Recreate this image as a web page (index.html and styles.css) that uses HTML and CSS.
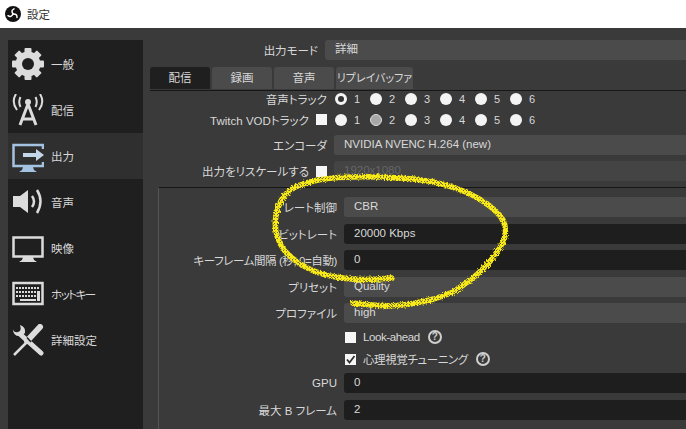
FILE: index.html
```html
<!DOCTYPE html>
<html>
<head>
    <meta charset="UTF-8">
    <title>設定</title>
    <link rel="stylesheet" href="styles.css">
</head>
<body>
    <div class="titlebar">
        <svg class="logo" viewBox="0 0 16 16">
            <circle cx="8" cy="8" r="8" fill="#111"/>
            <g fill="none" stroke="#fff" stroke-width="1.500" stroke-linecap="round">
                <path d="M8 8Q5.500 4.500 9 2.800"/>
                <path d="M8 8Q5.500 4.500 9 2.800" transform="rotate(120 8 8)"/>
                <path d="M8 8Q5.500 4.500 9 2.800" transform="rotate(240 8 8)"/>
            </g>
        </svg>
        <span>設定</span>
    </div>

    <div class="window">
        <!-- left list -->
        <div class="sidebar">
            <div class="nav-item">
                <svg viewBox="0 0 32 32">
                    <g fill="#dcdcdc">
                        <rect x="12.500" y="0" width="7" height="32" rx="1"/>
                        <rect x="12.500" y="0" width="7" height="32" rx="1" transform="rotate(45 16 16)"/>
                        <rect x="12.500" y="0" width="7" height="32" rx="1" transform="rotate(90 16 16)"/>
                        <rect x="12.500" y="0" width="7" height="32" rx="1" transform="rotate(135 16 16)"/>
                    </g>
                    <circle cx="16" cy="16" r="9" fill="none" stroke="#dcdcdc" stroke-width="7"/>
                    <circle cx="16" cy="16" r="6" fill="#1f1f1f"/>
                </svg>
                <span>一般</span>
            </div>
            <div class="nav-item">
                <svg viewBox="0 0 32 32">
                    <circle cx="16" cy="8" r="3" fill="#dcdcdc"/>
                    <path d="M16 10 8 31M16 10l8 21M11 25h10" fill="none" stroke="#dcdcdc" stroke-width="3"/>
                    <path d="M8.500 3Q6 8 8.500 13M23.500 3Q26 8 23.500 13M4 0Q-1 8 5 16M28 0Q33 8 27 16" fill="none" stroke="#dcdcdc" stroke-width="2"/>
                </svg>
                <span>配信</span>
            </div>
            <div class="nav-item selected">
                <svg viewBox="0 0 32 32">
                    <path d="M31 9V5H1.500v21H31v-4" fill="none" stroke="#a4c2e2" stroke-width="2.500"/>
                    <path d="M11 27h10l1 3 3 2H7l3-2z" fill="#a4c2e2"/>
                    <path d="M11 13h13V9l8 6-8 6v-4H11z" fill="#c3d6ea"/>
                </svg>
                <span>出力</span>
            </div>
            <div class="nav-item">
                <svg viewBox="0 0 32 32">
                    <path d="M1 10h7l8-6v23l-8-6H1z" fill="#dcdcdc"/>
                    <path d="M20 10q4 5.500 0 11M25 4q7 11 0 23" fill="none" stroke="#dcdcdc" stroke-width="2.500"/>
                </svg>
                <span>音声</span>
            </div>
            <div class="nav-item">
                <svg viewBox="0 0 32 32">
                    <rect x="1.500" y="5.500" width="29" height="19" fill="none" stroke="#dcdcdc" stroke-width="2.500"/>
                    <path d="M11 25h10l1 3 3 2H7l3-2z" fill="#dcdcdc"/>
                </svg>
                <span>映像</span>
            </div>
            <div class="nav-item">
                <svg viewBox="0 0 32 32">
                    <rect x="1.500" y="5" width="29" height="21" fill="none" stroke="#dcdcdc" stroke-width="2.500"/>
                    <path d="M4 10h24M4 14h24M4 18h24" fill="none" stroke="#dcdcdc" stroke-width="2" stroke-dasharray="2 1"/>
                    <path d="M8 22h16" fill="none" stroke="#dcdcdc" stroke-width="2"/>
                    <rect x="25" y="13" width="3" height="10" fill="#dcdcdc"/>
                </svg>
                <span class="tight">ホットキー</span>
            </div>
            <div class="nav-item">
                <svg viewBox="0 0 32 32">
                    <path d="M9 11 29 29" fill="none" stroke="#dcdcdc" stroke-width="5" stroke-linecap="round"/>
                    <path d="M1 5q0 8 8 7l4-3q1-6-5-8 2 6-2 7T1 5z" fill="#dcdcdc"/>
                    <path d="M2 31 16 17" fill="none" stroke="#dcdcdc" stroke-width="2.500"/>
                    <path d="M15 17 28 3" fill="none" stroke="#dcdcdc" stroke-width="6" stroke-linecap="round"/>
                    <path d="M15 13.500 19 18" fill="none" stroke="#1f1f1f" stroke-width="1.500"/>
                </svg>
                <span>詳細設定</span>
            </div>
        </div>

        <div class="main">
            <div class="row row-mode">
                <label class="name">出力モード</label>
                <div class="field">詳細</div>
            </div>

            <div class="tabs">
                <div class="tab active">配信</div>
                <div class="tab">録画</div>
                <div class="tab">音声</div>
                <div class="tab wide">リプレイバッファ</div>
            </div>

            <div class="panel">
                <div class="row track-row first">
                    <label class="name">音声トラック</label>
                    <div class="tracks">
                        <span class="track"><i class="radio on"></i><b>1</b></span>
                        <span class="track"><i class="radio"></i><b>2</b></span>
                        <span class="track"><i class="radio"></i><b>3</b></span>
                        <span class="track"><i class="radio"></i><b>4</b></span>
                        <span class="track"><i class="radio"></i><b>5</b></span>
                        <span class="track"><i class="radio"></i><b>6</b></span>
                    </div>
                </div>
                <div class="row track-row">
                    <label class="name">Twitch VODトラック<i class="check side"></i></label>
                    <div class="tracks">
                        <span class="track"><i class="radio"></i><b>1</b></span>
                        <span class="track"><i class="radio grey"></i><b>2</b></span>
                        <span class="track"><i class="radio"></i><b>3</b></span>
                        <span class="track"><i class="radio"></i><b>4</b></span>
                        <span class="track"><i class="radio"></i><b>5</b></span>
                        <span class="track"><i class="radio"></i><b>6</b></span>
                    </div>
                </div>
                <div class="row row-encoder">
                    <label class="name">エンコーダ</label>
                    <div class="field">NVIDIA NVENC H.264 (new)</div>
                </div>
                <div class="row row-rescale">
                    <label class="name">出力をリスケールする<i class="check side"></i></label>
                    <div class="field disabled">1920x1080</div>
                </div>

                <div class="group">
                    <div class="row g-first">
                        <label class="name">レート制御</label>
                        <div class="field">CBR</div>
                    </div>
                    <div class="row">
                        <label class="name">ビットレート</label>
                        <div class="field dark">20000 Kbps</div>
                    </div>
                    <div class="row">
                        <label class="name narrow">キーフレーム間隔 (秒, 0=自動)</label>
                        <div class="field dark">0</div>
                    </div>
                    <div class="row">
                        <label class="name">プリセット</label>
                        <div class="field">Quality</div>
                    </div>
                    <div class="row">
                        <label class="name">プロファイル</label>
                        <div class="field">high</div>
                    </div>
                    <div class="option">
                        <i class="check"></i>
                        <span class="narrow">Look-ahead</span>
                        <span class="help">?</span>
                    </div>
                    <div class="option">
                        <i class="check">
                            <svg viewBox="0 0 11 11"><path d="M2 5.500 4.500 8.500 9.500 2" fill="none" stroke="#333" stroke-width="1.800"/></svg>
                        </i>
                        <span class="narrow">心理視覚チューニング</span>
                        <span class="help">?</span>
                    </div>
                    <div class="row g-gpu">
                        <label class="name">GPU</label>
                        <div class="field dark">0</div>
                    </div>
                    <div class="row">
                        <label class="name">最大 B フレーム</label>
                        <div class="field dark">2</div>
                    </div>
                </div>
            </div>
        </div>
    </div>

    <!-- marker scribble drawn over the screenshot -->
    <svg class="scribble" viewBox="0 0 686 429">
        <defs>
            <pattern id="dither" width="3" height="3" patternUnits="userSpaceOnUse">
                <rect width="3" height="3" fill="#f7ea17"/>
                <rect x="1" y="1" width="1" height="1" fill="#6f6a2a"/>
                <rect x="2" y="0" width="1" height="1" fill="#b8ae20"/>
            </pattern>
            <filter id="rough" x="-5%" y="-5%" width="110%" height="110%">
                <feTurbulence type="fractalNoise" baseFrequency="0.6" numOctaves="2" seed="4"/>
                <feDisplacementMap in="SourceGraphic" scale="4"/>
            </filter>
        </defs>
        <path filter="url(#rough)" d="M392 278C370 280 350 280 336 277C315 274 296 264 284 250C276 238 274 226 276 216C278 204 284 194 292 189C300 184 308 182 318 180C340 176 370 176 400 178C420 179 440 182 458 189C475 195 495 207 503 220C508 230 505 242 498 250C490 264 475 278 453 292C435 300 420 303 403 305C385 307 368 305 353 303" fill="none" stroke="url(#dither)" stroke-width="5.500" stroke-linecap="round" stroke-linejoin="round"/>
    </svg>
</body>
</html>
```

FILE: styles.css
```css
html, body {
    margin: 0;
    height: 429px;
    overflow: hidden;
}

body {
    position: relative;
    background-color: #3a3a3a;
    font-family: "Liberation Sans", "Noto Sans CJK JP", sans-serif;
    font-size: 11.5px;
    font-feature-settings: "palt";
    color: #d8d8d8;
}

.titlebar {
    height: 28px;
    background-color: #fff;
    display: flex;
    align-items: center;
    padding-left: 5px;
    gap: 6px;
    color: #333;
}

.logo {
    width: 16px;
    height: 16px;
}

.window {
    display: flex;
    height: 401px;
    padding: 12px 0 0 8px;
    box-sizing: border-box;
}

/* left list */
.sidebar {
    width: 135px;
    flex: none;
    background-color: #1f1f1f;
    padding-top: 1px;
    box-sizing: border-box;
}

.nav-item {
    height: 46px;
    display: flex;
    align-items: center;
    gap: 7px;
    padding-left: 4px;
}

.nav-item svg {
    width: 32px;
    height: 32px;
    flex: none;
}

.nav-item.selected {
    background-color: #2f2f2f;
}

.tight {
    letter-spacing: -1.500px;
}

.narrow {
    letter-spacing: -0.400px;
}

/* right side */
.main {
    flex: 1;
    min-width: 0;
    margin-left: 7px;
}

.row {
    display: flex;
    align-items: center;
    height: 20px;
    gap: 7px;
}

.name {
    flex: none;
    display: flex;
    justify-content: flex-end;
    align-items: center;
    white-space: nowrap;
}

.field {
    flex: 1;
    height: 20px;
    line-height: 19px;
    padding-left: 10px;
    background-color: #4b4b4b;
    border-radius: 3px 0 0 3px;
}

.field.dark {
    background-color: #1e1e1e;
}

.field.disabled {
    background-color: #444;
    color: #666;
}

.row-mode .name {
    width: 168px;
}

.tabs {
    display: flex;
    gap: 2px;
    margin-top: 7px;
    height: 23px;
}

.tab {
    width: 60px;
    height: 22px;
    line-height: 22px;
    text-align: center;
    background-color: #4b4b4b;
    border-radius: 3px 3px 0 0;
}

.tab.active {
    background-color: #1f1f1f;
}

.tab.wide {
    width: 77px;
    font-size: 11px;
}

.panel {
    border-top: 1px solid #161616;
}

.panel > .row .name {
    width: 177px;
}

.track-row {
    height: 21px;
}

.track-row.first {
    margin-top: -3px;
}

.tracks {
    display: flex;
    margin-left: 1px;
}

.track {
    width: 35px;
    display: flex;
    align-items: center;
    gap: 7px;
}

.track b {
    font-weight: 400;
    font-size: 11px;
    line-height: 12px;
}

.radio {
    width: 12px;
    height: 12px;
    border-radius: 50%;
    background-color: #f4f4f4;
    box-sizing: border-box;
    flex: none;
}

.radio.on {
    background-color: #333;
    border: 3px solid #f4f4f4;
}

.radio.grey {
    background-color: #a8a8a8;
    border: 1px solid #ddd;
}

.check {
    display: block;
    width: 11px;
    height: 11px;
    background-color: #f6f6f6;
    flex: none;
}

.check svg {
    display: block;
}

.check.side {
    margin-left: 7px;
}

.row-encoder {
    margin-top: 5px;
}

.row-rescale {
    margin-top: 6px;
}

.group {
    margin: 6px 0 0 8px;
    border-top: 1px solid #161616;
    border-left: 1px solid #555;
    height: 260px;
}

.group .row {
    margin-top: 6.600px;
}

.group .name {
    width: 178px;
}

.group .g-first {
    margin-top: 9px;
}

.group .g-gpu {
    margin-top: 6px;
}

.option {
    display: flex;
    align-items: center;
    height: 16px;
    margin-left: 186px;
    gap: 7px;
    margin-top: 6px;
}

.help {
    width: 10px;
    height: 10px;
    border: 2px solid #cfcfcf;
    border-radius: 50%;
    color: #cfcfcf;
    font-size: 10px;
    font-weight: 700;
    line-height: 10px;
    text-align: center;
    margin-left: 1px;
}

.scribble {
    position: absolute;
    left: 0;
    top: 0;
    width: 686px;
    height: 429px;
    pointer-events: none;
}
```
